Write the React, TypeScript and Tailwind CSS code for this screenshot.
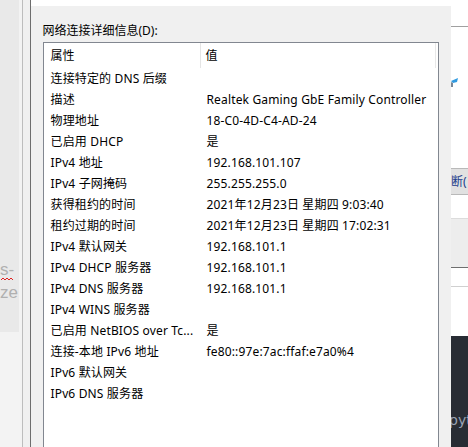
import React from "react";

const rows: [string, string][] = [
  ["连接特定的 DNS 后缀", ""],
  ["描述", "Realtek Gaming GbE Family Controller"],
  ["物理地址", "18-C0-4D-C4-AD-24"],
  ["已启用 DHCP", "是"],
  ["IPv4 地址", "192.168.101.107"],
  ["IPv4 子网掩码", "255.255.255.0"],
  ["获得租约的时间", "2021年12月23日 星期四 9:03:40"],
  ["租约过期的时间", "2021年12月23日 星期四 17:02:31"],
  ["IPv4 默认网关", "192.168.101.1"],
  ["IPv4 DHCP 服务器", "192.168.101.1"],
  ["IPv4 DNS 服务器", "192.168.101.1"],
  ["IPv4 WINS 服务器", ""],
  ["已启用 NetBIOS over Tc...", "是"],
  ["连接-本地 IPv6 地址", "fe80::97e:7ac:ffaf:e7a0%4"],
  ["IPv6 默认网关", ""],
  ["IPv6 DNS 服务器", ""],
];

function LeftStrip() {
  return (
    <div className="flex h-full w-[30px] shrink-0">
      <div className="flex w-[19px] flex-col">
        <div className="relative h-[332px] overflow-hidden bg-[#e9e9e9] font-['Liberation_Sans',sans-serif] text-[17px] leading-[23px] text-[#b0b0b0]">
          <div className="pt-[258px]">
            <span className="relative">
              s-
              <svg className="absolute left-[1px] top-[17px]" width="12" height="4" viewBox="0 0 12 4">
                <path d="M0 3 L2 1 L4 3 L6 1 L8 3 L10 1 L12 3" fill="none" stroke="#e02020" strokeWidth="1" />
              </svg>
            </span>
          </div>
          <div>ze</div>
        </div>
        <div className="flex-1 bg-[#f3f3f3]" />
      </div>
      <div className="w-[3px] bg-[#f3f3f3]" />
      <div className="w-px bg-[#bdbdbd]" />
      <div className="w-[7px] bg-[#f0f0f0]" />
    </div>
  );
}

function RightStrip() {
  return (
    <div className="flex h-full w-[17px] shrink-0 flex-col overflow-hidden bg-white">
      <div className="h-[27px] border-b border-[#a0a0a0]" />
      <div className="relative h-[141px]">
        <svg className="absolute left-0 top-[50px]" width="8" height="10" viewBox="0 0 8 10">
          <path d="M0 4 L7 1 L6 5 L2 6 Z" fill="#2f9ae0" />
          <path d="M0 5 L2 6 L2 10 L0 10 Z" fill="#7a8896" />
        </svg>
      </div>
      <div className="h-[27px] overflow-hidden border-y border-[#b9b9b9] bg-[#e1e1e1] text-[12px] leading-[25px] whitespace-nowrap text-[#1a3a8a]">
        <span className="-ml-[12px] inline-block">诊断(</span>
      </div>
      <div className="h-[23px]" />
      <div className="h-[49px] border-t border-[#dcdcdc] bg-[#ededed]" />
      <div className="h-[19px] border-t border-[#6f6f6f]" />
      <div className="h-[50px] border-t border-[#d0d0d0]" />
      <div className="flex-1 bg-[#282c34] pt-[75px] text-[14px] leading-[18px] whitespace-nowrap text-[#9aa3b5]">
        <span className="-ml-[2px] inline-block font-['DejaVu_Sans',sans-serif]">pyt</span>
      </div>
    </div>
  );
}

export default function App() {
  return (
    <div className="flex h-[447px] w-[468px] overflow-hidden bg-[#f0f0f0] font-['Noto_Sans','Noto_Sans_CJK_SC',sans-serif] text-[12px] text-black">
      <LeftStrip />
      <div className="w-px bg-[#6d6d6d]" />
      <div className="flex w-[420px] shrink-0 flex-col">
        <div className="h-[6px] bg-white" />
        <div className="flex flex-1 flex-col px-[12px] pt-[16px]">
          <div className="h-[20px] leading-[18px]">网络连接详细信息(D):</div>
          <div className="flex-1 border border-b-0 border-[#828790] bg-white">
            <div className="flex h-[25px] items-center">
              <div className="flex h-full w-[157px] items-center border-r border-[#e5e5e5] pl-[7px]">属性</div>
              <div className="flex h-full w-[235px] items-center border-r border-[#e8e8e8] pl-[5px]">值</div>
            </div>
            {rows.map(([k, v]) => (
              <div key={k} className="flex h-[21px] items-center whitespace-nowrap tracking-[0.15px]">
                <div className="w-[157px] overflow-hidden pl-[7px]">{k}</div>
                <div className="pl-[6px]">{v}</div>
              </div>
            ))}
          </div>
        </div>
      </div>
      <div className="w-px bg-[#7a7a7a]" />
      <RightStrip />
    </div>
  );
}
